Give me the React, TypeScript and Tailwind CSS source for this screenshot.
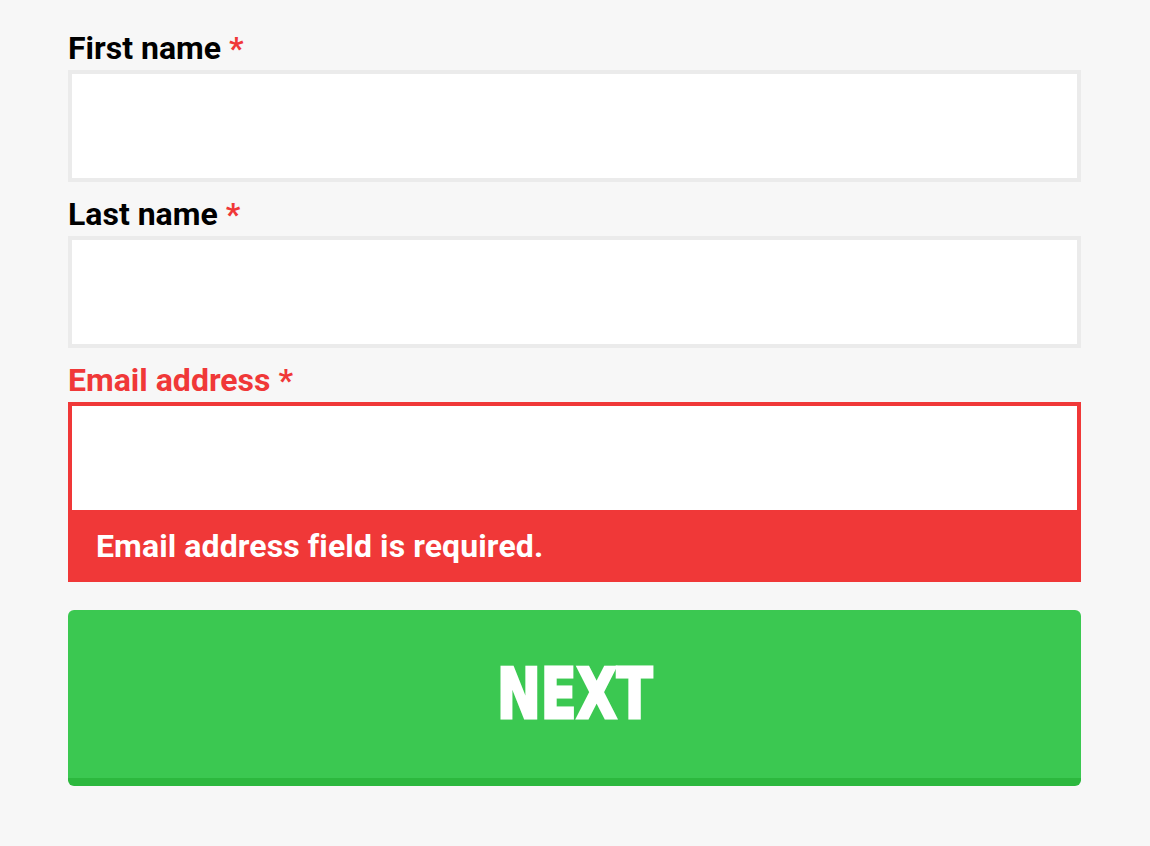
import React from 'react';

const font = { fontFamily: 'Roboto, "Noto Sans", sans-serif' };

const Field: React.FC<{ label: string; error?: string }> = ({ label, error }) => (
  <div className="flex flex-col">
    <label
      className={`text-[32px] leading-[37px] font-bold mb-[3px] ${error ? 'text-[#f03838]' : 'text-black'}`}
    >
      {label} <span className="text-[#f03838]">*</span>
    </label>
    {error ? (
      <div className="flex flex-col">
        <input className="h-[108px] w-full bg-white border-4 border-b-0 border-[#f03838] outline-none" />
        <div className="h-[72px] bg-[#f03838] flex items-center px-7 text-[32px] leading-[37px] font-bold text-white tracking-[0.1px]">
          {error}
        </div>
      </div>
    ) : (
      <input className="h-[112px] w-full bg-white border-4 border-[#ebebeb] outline-none" />
    )}
  </div>
);

export default function App() {
  return (
    <div className="min-h-screen bg-[#f7f7f7]" style={font}>
      <form className="w-[1013px] ml-[68px] pt-[30px] flex flex-col gap-[14px]">
        <Field label="First name" />
        <Field label="Last name" />
        <Field label="Email address" error="Email address field is required." />
        <button
          type="button"
          className="mt-[14px] h-[176px] w-full rounded-md bg-[#3bc851] border-b-8 border-[#2cb83e] flex items-center justify-center"
        >
          <span
            className="inline-block text-white font-bold text-[70px] leading-none scale-x-[0.83] [-webkit-text-stroke:3px_white]"
            style={{ fontFamily: '"DejaVu Sans Condensed", "DejaVu Sans", sans-serif', fontStretch: 'condensed' }}
          >
            NEXT
          </span>
        </button>
      </form>
    </div>
  );
}
